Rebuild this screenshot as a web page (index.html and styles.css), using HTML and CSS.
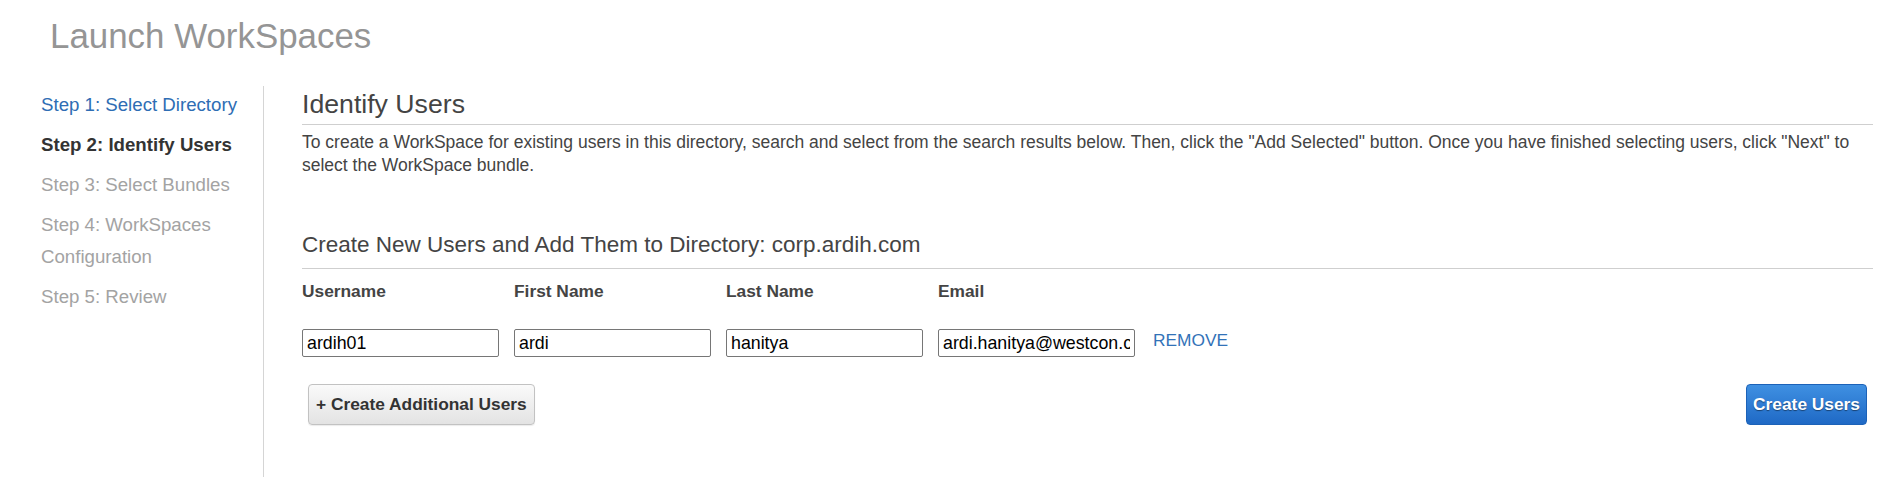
FILE: index.html
```html
<!DOCTYPE html>
<html lang="en">
<head>
<meta charset="utf-8">
<title>Launch WorkSpaces</title>
<link rel="stylesheet" href="styles.css">
</head>
<body>
<div class="page">
  <h1 class="title">Launch WorkSpaces</h1>
  <div class="layout">
    <nav class="sidebar">
      <ul class="steps">
        <li class="step step-link">Step 1: Select Directory</li>
        <li class="step step-current">Step 2: Identify Users</li>
        <li class="step step-muted">Step 3: Select Bundles</li>
        <li class="step step-muted">Step 4: WorkSpaces Configuration</li>
        <li class="step step-muted">Step 5: Review</li>
      </ul>
    </nav>
    <main class="content">
      <h2 class="section-title">Identify Users</h2>
      <p class="intro">To create a WorkSpace for existing users in this directory, search and select from the search results below. Then, click the "Add Selected" button. Once you have finished selecting users, click "Next" to select the WorkSpace bundle.</p>
      <h3 class="sub-title">Create New Users and Add Them to Directory: corp.ardih.com</h3>
      <div class="user-grid">
        <div class="col-label">Username</div>
        <div class="col-label">First Name</div>
        <div class="col-label">Last Name</div>
        <div class="col-label">Email</div>
        <div></div>
        <input class="field" type="text" value="ardih01">
        <input class="field" type="text" value="ardi">
        <input class="field" type="text" value="hanitya">
        <input class="field" type="text" value="ardi.hanitya@westcon.com">
        <a class="remove" href="#">REMOVE</a>
      </div>
      <div class="actions">
        <button class="btn btn-secondary" type="button">+ Create Additional Users</button>
        <button class="btn btn-primary" type="button">Create Users</button>
      </div>
    </main>
  </div>
</div>
</body>
</html>
```
FILE: styles.css
```css
* { box-sizing: border-box; }
html, body { margin: 0; padding: 0; background: #fff; }
body {
  font-family: "Liberation Sans", Arial, sans-serif;
  color: #444;
  height: 477px;
  overflow: hidden;
}
.page {
  padding-left: 41px;
  padding-right: 19px;
  height: 100%;
  display: flex;
  flex-direction: column;
}
.title {
  margin: 16px 0 0 9px;
  font-size: 34.9px;
  line-height: 40px;
  font-weight: normal;
  color: #959595;
}
.layout {
  margin-top: 30px;
  display: flex;
  flex: 1;
}
.sidebar {
  width: 223px;
  flex: none;
  border-right: 1px solid #d5d5d5;
  padding-top: 3px;
}
.steps {
  list-style: none;
  margin: 0;
  padding: 0;
  width: 200px;
}
.step {
  font-size: 18.67px;
  line-height: 32px;
  margin-bottom: 8px;
}
.step-link { color: #2e6db4; }
.step-current { color: #333; font-weight: bold; }
.step-muted { color: #a3a3a3; }
.content {
  flex: 1;
  padding: 2px 0 0 38px;
}
.section-title {
  margin: 0;
  font-size: 26.67px;
  line-height: 32px;
  font-weight: normal;
  color: #444;
  padding-bottom: 4px;
  border-bottom: 1px solid #cfcfcf;
}
.intro {
  margin: 6px 0 0;
  font-size: 17.5px;
  line-height: 23px;
  color: #444;
}
.sub-title {
  margin: 54px 0 0;
  font-size: 22.5px;
  line-height: 28px;
  font-weight: normal;
  color: #444;
  padding-bottom: 9px;
  border-bottom: 1px solid #cfcfcf;
}
.user-grid {
  margin-top: 12px;
  display: grid;
  grid-template-columns: 197px 197px 197px 197px auto;
  column-gap: 15px;
  row-gap: 26.5px;
  align-items: center;
  justify-content: start;
}
.col-label {
  font-size: 17.33px;
  line-height: 21.5px;
  font-weight: bold;
  color: #444;
}
.field {
  height: 28px;
  width: 197px;
  border: 1px solid #767676;
  border-radius: 2px;
  padding: 1px 4px;
  margin: 0;
  font-family: "Liberation Sans", Arial, sans-serif;
  font-size: 17.8px;
  color: #000;
  background: #fff;
}
.remove {
  margin-left: 3px;
  margin-top: -5px;
  font-size: 17.33px;
  color: #3272b8;
  text-decoration: none;
}
.actions {
  margin-top: 27px;
  display: flex;
  justify-content: space-between;
  padding: 0 6px;
}
.btn {
  height: 41px;
  padding: 0 7px;
  border-radius: 4px;
  font-family: "Liberation Sans", Arial, sans-serif;
  font-size: 17.33px;
  font-weight: bold;
  cursor: pointer;
}
.btn-secondary {
  color: #333;
  background: linear-gradient(#fafafa, #e3e3e3);
  border: 1px solid #c2c2c2;
  box-shadow: 0 1px 1px rgba(0,0,0,0.08);
}
.btn-primary {
  color: #fff;
  padding: 0 6px;
  background: linear-gradient(#3f90e2, #1f69c5);
  border: 1px solid #1c62b8;
  text-shadow: 0 1px 1px rgba(0,0,0,0.45);
}
```
